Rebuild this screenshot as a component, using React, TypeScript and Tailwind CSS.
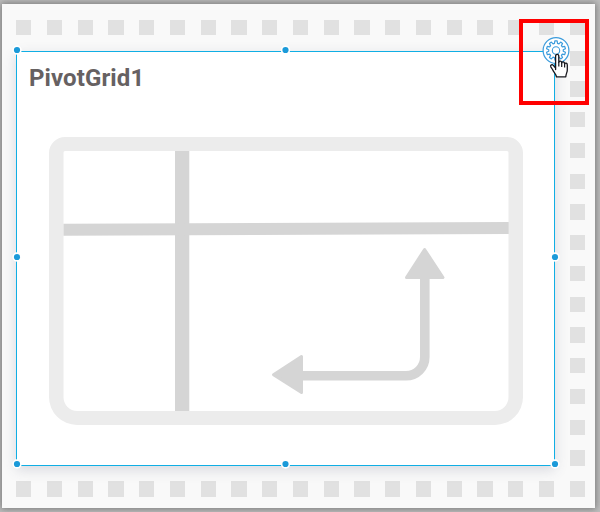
const gear = Array.from({ length: 10 }, (_, i) => {
  const p = (r: number, deg: number) => {
    const a = ((i * 36 + deg - 90) * Math.PI) / 180;
    return `${(13.5 + r * Math.cos(a)).toFixed(2)} ${(13.5 + r * Math.sin(a)).toFixed(2)}`;
  };
  return `${i ? 'L' : 'M'}${p(7.3, -12)} L${p(9.6, -7)} L${p(9.6, 7)} L${p(7.3, 12)}`;
}).join(' ') + ' Z';

function Dot() {
  return <span className="block h-[15.3px] w-[15.3px] shrink-0 bg-[#e1e1e1]" />;
}

function DotRow() {
  return (
    <div className="flex w-[569px] justify-between">
      {Array.from({ length: 19 }, (_, i) => <Dot key={i} />)}
    </div>
  );
}

function Handle({ place, size = 'w-[10px]' }: { place: string; size?: string }) {
  return (
    <svg className={`absolute h-[10px] ${size} ${place}`} viewBox="0 0 10 10">
      <circle cx="5" cy="5" r="4.7" fill="#fff" />
      <circle cx="5" cy="5" r="3.1" fill="#1b9ad9" />
    </svg>
  );
}

function PivotPlaceholder() {
  return (
    <svg className="ml-[32px] mt-[44px] block h-[288px] w-[475px]" viewBox="49 137 475 288">
      <path
        fillRule="evenodd"
        fill="#ececec"
        d="M65 137H507A16 16 0 0 1 523 153V397A28 28 0 0 1 495 425H77A28 28 0 0 1 49 397V153A16 16 0 0 1 65 137ZM65 151Q63.5 151 63.5 152.5V397A13.700 14 0 0 0 77.200 411H494.800A13.700 14 0 0 0 508.500 397V152.500Q508.500 151 507 151Z"
      />
      <path fill="#d5d5d5" d="M175 151H189.300V411H175Z" />
      <path fill="#d5d5d5" d="M63.500 223.700L508.700 222V234L63.500 235.700Z" />
      <path fill="none" stroke="#d5d5d5" strokeWidth="9.600" d="M424.800 277V357A18.800 18.800 0 0 1 406 375.800H301" />
      <path
        fill="#d5d5d5"
        stroke="#d5d5d5"
        strokeWidth="3"
        strokeLinejoin="round"
        d="M424.600 249.500L443 277.500H406.500ZM273.500 374.700L301.500 356.500V392.500Z"
      />
    </svg>
  );
}

function SettingsButton() {
  return (
    <button aria-label="Settings" className="absolute left-[525px] top-[-15px] block h-[27px] w-[28px]">
      <svg className="block h-[27px] w-[28px]" viewBox="0 0 27 27" fill="none" stroke="#3c9cdc">
        <circle cx="13.5" cy="13.5" r="12.900" fill="#fff" strokeWidth="1.2" />
        <path d={gear} strokeWidth="1.2" strokeLinejoin="round" />
        <circle cx="13.5" cy="13.5" r="3.700" strokeWidth="1.100" />
      </svg>
    </button>
  );
}

function Cursor() {
  return (
    <svg className="absolute left-[549px] top-[53px] h-[26px] w-[20px]" viewBox="549 53 20 26">
      <path
        fill="#fff"
        stroke="#17171d"
        strokeWidth="1.300"
        strokeLinejoin="round"
        d="M555.600 69.500V56.500C555.600 53.700 558.800 53.700 558.800 56.500V62.300C559.300 60.500 561.700 60.900 561.700 63C562.300 61.300 564.500 61.700 564.600 63.900C565.300 62.500 567.300 63 567.300 65V70C567.300 72.300 566 73.500 565.800 76.800H556.500C556.200 74.300 553.800 72.300 552.500 69.500L550.800 66.800C550 65 552.200 64 553.300 65.400L555.600 68.200Z"
      />
      <path fill="none" stroke="#17171d" strokeWidth="1.200" d="M558.800 62V66.500M561.700 63V67M564.600 64V67.500" />
    </svg>
  );
}

export default function App() {
  return (
    <main className="relative h-[512px] w-[600px] overflow-hidden bg-[#bfbfbf] pl-[2px] pt-[4px] font-[Roboto,sans-serif]">
      <div className="flex h-[504px] w-[593px] flex-col bg-[#f9f9f9] pl-[14px] pt-[16px] shadow-[0_0_7px_1px_#777777]">
        <DotRow />
        <div className="mt-[15.7px] flex h-[415px] w-[569px] justify-between">
          <section className="relative h-[415px] w-[539px] border border-[#10aee4] bg-white shadow-[0_4px_12px_rgba(70,80,110,0.18)]">
            <h1 className="ml-[12px] mt-[11px] h-[30px] text-[24px] font-bold leading-[30px] tracking-[0.1px] text-[#666162]">PivotGrid1</h1>
            <PivotPlaceholder />
            <Handle place="left-[-5px] top-[-7px]" />
            <Handle place="left-[263px] top-[-7px]" size="w-[11px]" />
            <Handle place="left-[-5px] top-[200px]" />
            <Handle place="left-[533px] top-[200px]" />
            <Handle place="left-[-5px] top-[407px]" />
            <Handle place="left-[263px] top-[407px]" size="w-[11px]" />
            <Handle place="left-[533px] top-[407px]" />
            <SettingsButton />
          </section>
          <div className="mt-[-0.3px] flex h-[415px] flex-col justify-between">
            {Array.from({ length: 14 }, (_, i) => <Dot key={i} />)}
          </div>
        </div>
        <div className="mt-[15.300px]">
          <DotRow />
        </div>
      </div>
      <Cursor />
      <div className="absolute left-[519px] top-[19px] h-[86px] w-[70px] border-4 border-[#ff0000]" />
    </main>
  );
}
